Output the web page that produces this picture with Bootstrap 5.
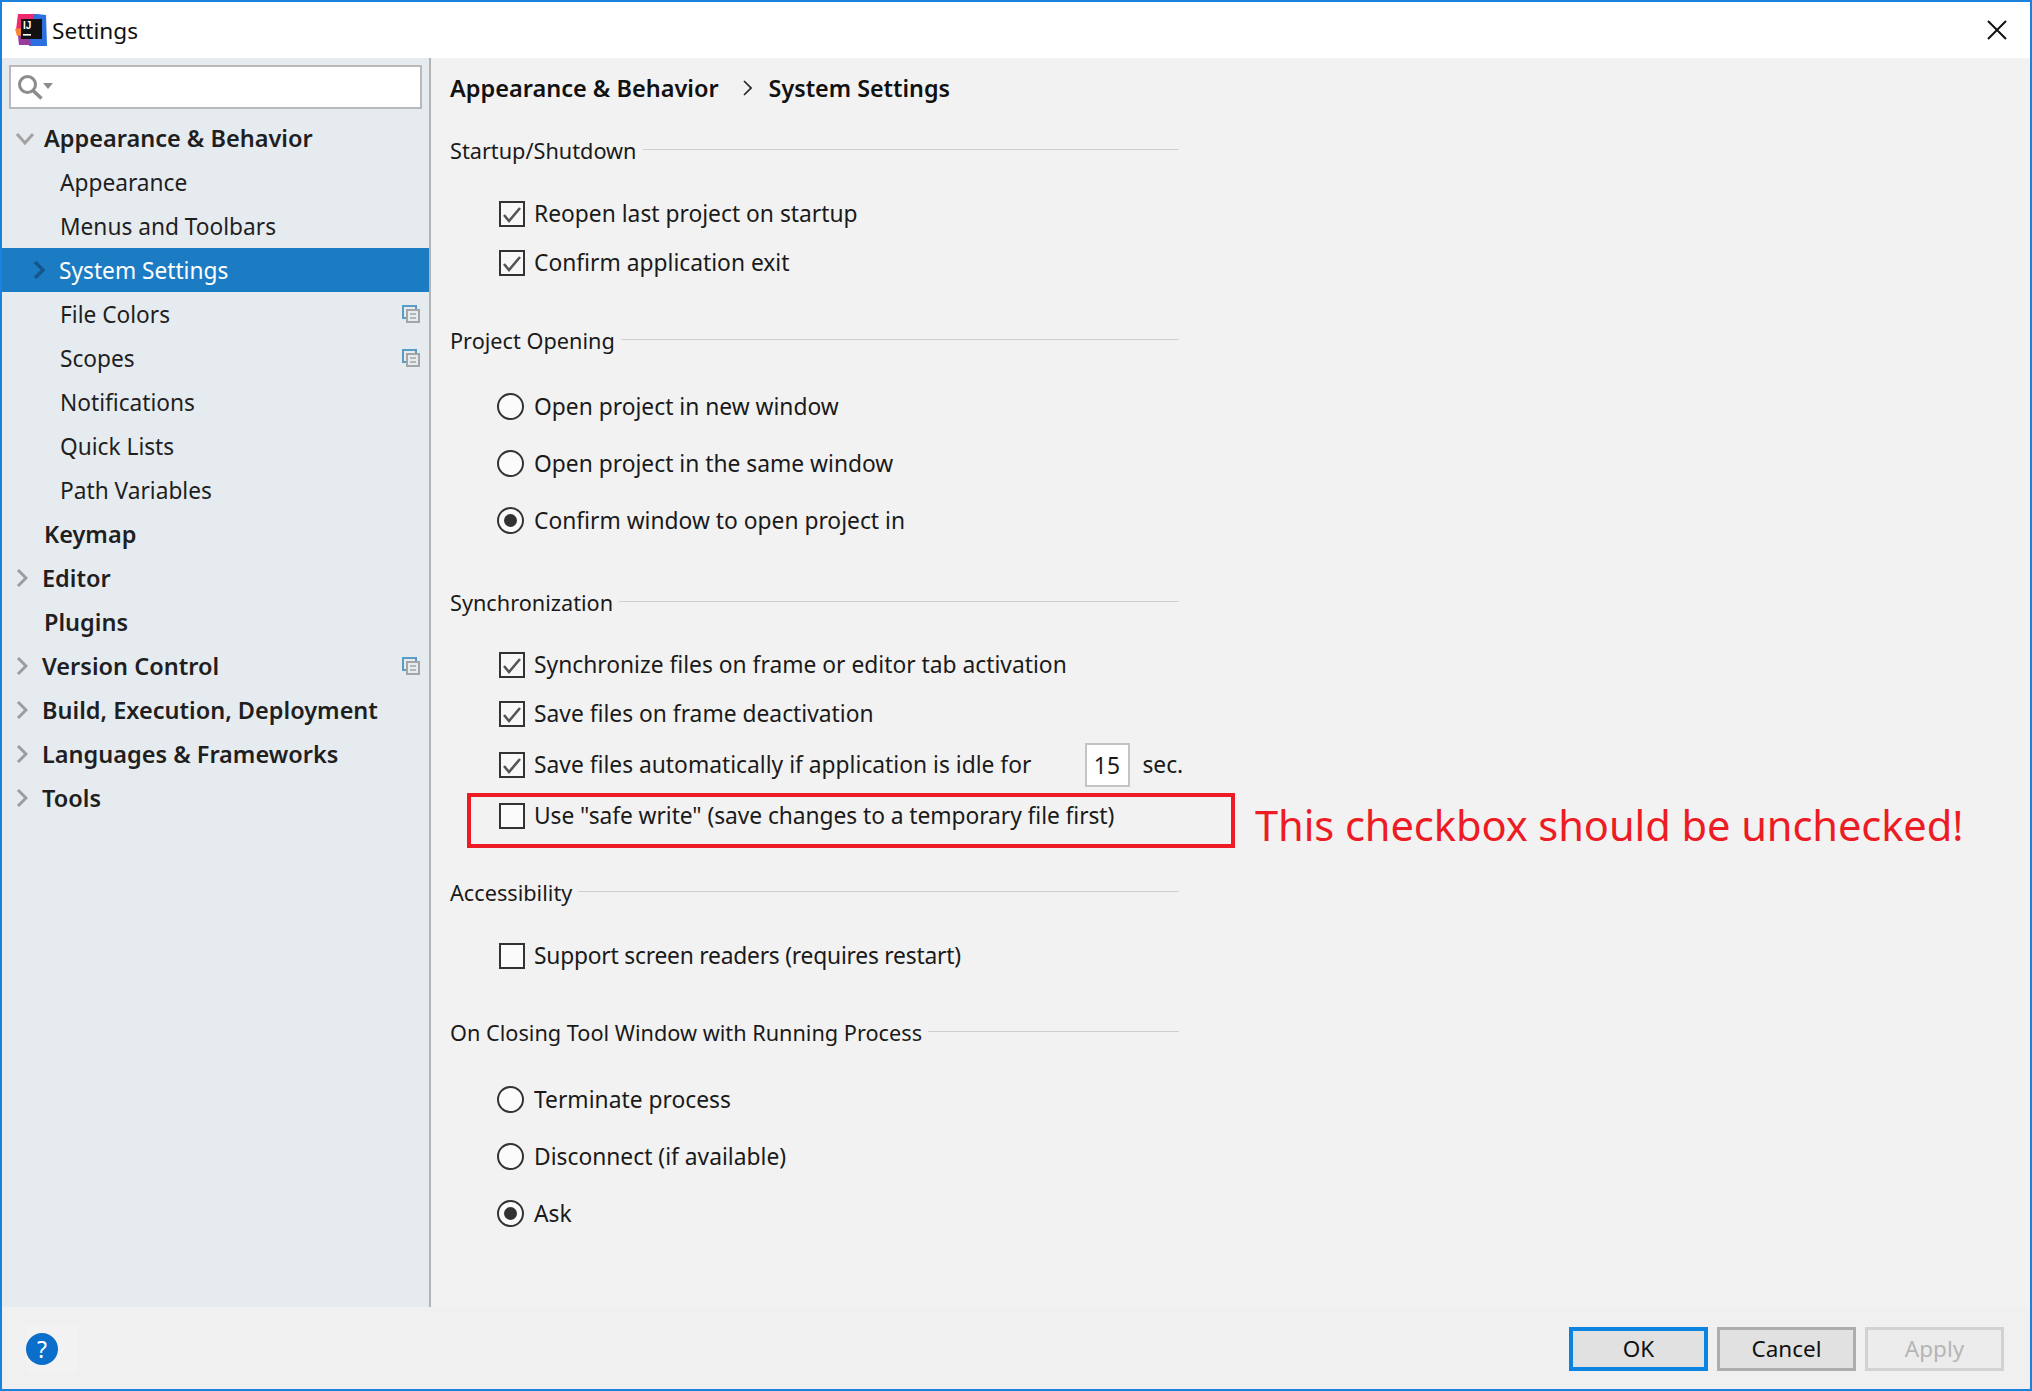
<!DOCTYPE html>
<html lang="en">
<head>
<meta charset="utf-8">
<title>Settings</title>
<link href="https://cdn.jsdelivr.net/npm/bootstrap@5.3.0/dist/css/bootstrap.min.css" rel="stylesheet">
<style>
html,body{height:100%;overflow:hidden}
body{font-family:"Noto Sans","Open Sans",sans-serif;font-size:22.8px;color:#1a1a1a;background:#f2f2f2;line-height:1.3}
.win{height:1391px;border:2px solid #1a82dc;background:#f2f2f2}
.titlebar{height:56px;background:#fff;padding:0 23px 0 13px}
.titlebar .ttl{font-size:22.6px;margin:2px 0 0 5px;color:#111}
.mid{min-height:0}
.side{width:429px;background:#e6ebf0;border-right:2px solid #b3b3b3;flex:none}
.searchwrap{padding:7px}
.searchbox{height:44px;background:#fff;border:2px solid #b9b9b9;padding-left:7px}
.tree{list-style:none;margin:0;padding:0;font-size:22.7px}
.tree li{height:44px;display:flex;align-items:center;color:#1f1f1f}
.t-top,.t-arr,.t-open{font-weight:600;font-size:23.5px;color:#161616}
.t-top{padding-left:42px}
.t-arr{padding-left:14px}
.t-arr svg:first-child{margin-right:14px}
.t-open{padding-left:13px}
.t-open svg{margin:2px 9px 0 0}
.t-kid{padding-left:58px;padding-top:2px}
.tree li.t-sel{background:#1b7cc4;color:#fff;padding-left:31px;padding-top:2px}
.t-sel svg{margin:-2px 14px 0 0}
.t-kid svg{margin-top:-2px}
.cp{margin-left:auto;margin-right:9px}
.pane{padding-left:19px;min-width:0}
.crumbs{height:73px;padding-top:11px;font-weight:600;font-size:23.5px;color:#111}
.crumbs .cpath{height:38px}
.crumbs svg{margin:0 17px 0 24px}
.crumbs .cend{font-size:23.3px}
.sect{width:729px;margin-top:34px}
.sect.first{margin-top:0}
.sect.after{margin-top:33px}
.sect-h{height:40px;margin-bottom:17px;font-size:21.7px}
.first .sect-h,.low .sect-h{margin-bottom:18px}
.sect-h i{flex:1;height:1px;background:#cfcfcf;margin:0 0 4px 6px;display:block}
.opt{height:49px;padding-left:49px}
.opt.big{height:54px}
.opt.end{height:47px}
.opt.rad{height:57px;padding-left:47px}
.tight-a{letter-spacing:-.07px}
.tight-b{letter-spacing:-.22px}
.form-check-input.bx{width:26px;height:26px;margin:0 9px 0 0;border:2px solid #333;border-radius:0;background-color:#fbfbfb;flex:none;box-shadow:none;opacity:1}
.form-check-input.bx:checked{background-color:#f8f8f8;border-color:#333;background-size:22px 22px;background-image:url("data:image/svg+xml,%3csvg xmlns='http://www.w3.org/2000/svg' viewBox='0 0 22 22'%3e%3cpath d='M3 12l5 6L19 5' fill='none' stroke='%23555' stroke-width='2.6'/%3e%3c/svg%3e")}
.form-check-input.rd{width:27px;height:27px;margin:0 10px 0 0;border:2px solid #333;border-radius:50%;background-color:#fbfbfb;flex:none;box-shadow:none;opacity:1}
.form-check-input.rd:checked{border-color:#333;background-color:#fbfbfb;background-size:23px 23px;background-image:url("data:image/svg+xml,%3csvg xmlns='http://www.w3.org/2000/svg' viewBox='0 0 23 23'%3e%3ccircle cx='11.5' cy='11.5' r='6.5' fill='%23333'/%3e%3c/svg%3e")}
.form-control.secs{width:45px;height:44px;border:2px solid #c4c4c4;border-radius:0;padding:0 2px 0 0;text-align:center;margin:0 12px 0 54px;font-size:22.8px;color:#1a1a1a;background:#fff}
.flagbox{position:absolute;left:17px;top:1px;width:768px;height:55px;border:4px solid #ed1c24}
.flagnote{position:absolute;left:805px;top:3px;font-size:41.6px;line-height:60px;color:#ed1c24;white-space:nowrap}
.foot{height:82px;background:#f0f0f0;padding:18px 26px 0 24px;flex:none}
.helpbox{width:52px;height:48px;background:#f2f2f2;padding-left:0}
.helpdot{width:32px;height:32px;border-radius:50%;background:#0a6fcb;color:#fff;font-size:23px;line-height:32px;text-align:center;margin-left:0}
.btn.dlg{width:139px;height:44px;border-radius:0;font-size:22.5px;line-height:1;padding:0;color:#111;background:#e1e1e1;border:3px solid #adadad;margin-top:2px}
.btn.dlg.pri{border:4px solid #0a84e0}
.btn.dlg:disabled{background:#ececec;border-color:#d2d2d2;color:#b5b5b5;opacity:1}
.gap9{gap:9px}
</style>
</head>
<body>
<div class="win d-flex flex-column">
  <div class="titlebar d-flex align-items-center flex-none">
    <svg width="32" height="32" viewBox="0 0 32 32">
      <polygon points="13,-1 31,1 32,32 14,32" fill="#2b6fe0"/>
      <polygon points="3,0 20,-1 15,14 1,16" fill="#f0286e"/>
      <polygon points="0,15 7,14 7,23 2,22" fill="#f58634"/>
      <polygon points="3,22 14,20 16,31 4,31" fill="#9a3b9e"/>
      <rect x="6" y="5" width="21" height="20" fill="#111"/>
      <text x="8" y="14.5" font-family="Liberation Sans" font-weight="700" font-size="10" fill="#fff">IJ</text>
      <rect x="8" y="20" width="8" height="1.6" fill="#fff"/>
    </svg>
    <span class="ttl">Settings</span>
    <svg class="ms-auto" width="20" height="20" viewBox="0 0 20 20"><path d="M1 1l18 18M19 1L1 19" stroke="#111" stroke-width="2" fill="none"/></svg>
  </div>
  <div class="mid d-flex flex-grow-1">
    <div class="side">
      <div class="searchwrap">
        <div class="searchbox d-flex align-items-center">
          <svg width="36" height="26" viewBox="0 0 36 26"><circle cx="9.5" cy="10.5" r="8" fill="none" stroke="#8c8c8c" stroke-width="3"/><path d="M15 16.5l8.5 8" stroke="#8c8c8c" stroke-width="3.6"/><path d="M25 9h10l-5 6z" fill="#8c8c8c"/></svg>
        </div>
      </div>
      <ul class="tree">
        <li class="t-open"><svg width="20" height="14" viewBox="0 0 20 14"><path d="M2 2l8 9 8-9" fill="none" stroke="#a3a3a3" stroke-width="3"/></svg>Appearance &amp; Behavior</li>
        <li class="t-kid">Appearance</li>
        <li class="t-kid">Menus and Toolbars</li>
        <li class="t-sel"><svg width="12" height="20" viewBox="0 0 12 20"><path d="M2 2l8 8-8 8" fill="none" stroke="#14578f" stroke-width="3.6"/></svg>System Settings</li>
        <li class="t-kid">File Colors<svg class="cp" width="18" height="18" viewBox="0 0 18 18"><rect x="1" y="1" width="13" height="12" fill="none" stroke="#5a9cc4" stroke-width="2"/><rect x="5" y="5" width="12" height="12" fill="#e6ebf0" stroke="#a5a5a5" stroke-width="2"/><path d="M8 9h6M8 13h6" stroke="#a5a5a5" stroke-width="1.6"/></svg></li>
        <li class="t-kid">Scopes<svg class="cp" width="18" height="18" viewBox="0 0 18 18"><rect x="1" y="1" width="13" height="12" fill="none" stroke="#5a9cc4" stroke-width="2"/><rect x="5" y="5" width="12" height="12" fill="#e6ebf0" stroke="#a5a5a5" stroke-width="2"/><path d="M8 9h6M8 13h6" stroke="#a5a5a5" stroke-width="1.6"/></svg></li>
        <li class="t-kid">Notifications</li>
        <li class="t-kid">Quick Lists</li>
        <li class="t-kid">Path Variables</li>
        <li class="t-top">Keymap</li>
        <li class="t-arr"><svg width="12" height="20" viewBox="0 0 12 20"><path d="M2 2l8 8-8 8" fill="none" stroke="#9d9d9d" stroke-width="3"/></svg>Editor</li>
        <li class="t-top">Plugins</li>
        <li class="t-arr"><svg width="12" height="20" viewBox="0 0 12 20"><path d="M2 2l8 8-8 8" fill="none" stroke="#9d9d9d" stroke-width="3"/></svg>Version Control<svg class="cp" width="18" height="18" viewBox="0 0 18 18"><rect x="1" y="1" width="13" height="12" fill="none" stroke="#5a9cc4" stroke-width="2"/><rect x="5" y="5" width="12" height="12" fill="#e6ebf0" stroke="#a5a5a5" stroke-width="2"/><path d="M8 9h6M8 13h6" stroke="#a5a5a5" stroke-width="1.6"/></svg></li>
        <li class="t-arr"><svg width="12" height="20" viewBox="0 0 12 20"><path d="M2 2l8 8-8 8" fill="none" stroke="#9d9d9d" stroke-width="3"/></svg>Build, Execution, Deployment</li>
        <li class="t-arr"><svg width="12" height="20" viewBox="0 0 12 20"><path d="M2 2l8 8-8 8" fill="none" stroke="#9d9d9d" stroke-width="3"/></svg>Languages &amp; Frameworks</li>
        <li class="t-arr"><svg width="12" height="20" viewBox="0 0 12 20"><path d="M2 2l8 8-8 8" fill="none" stroke="#9d9d9d" stroke-width="3"/></svg>Tools</li>
      </ul>
    </div>
    <div class="pane flex-grow-1">
      <div class="crumbs"><div class="cpath d-flex align-items-center">Appearance &amp; Behavior<svg width="9" height="16" viewBox="0 0 9 16"><path d="M1 1l7 7-7 7" fill="none" stroke="#222" stroke-width="1.6"/></svg><span class="cend">System Settings</span></div></div>

      <div class="sect first">
        <div class="sect-h d-flex align-items-center">Startup/Shutdown<i></i></div>
        <label class="opt d-flex align-items-center"><input class="form-check-input bx" type="checkbox" checked>Reopen last project on startup</label>
        <label class="opt d-flex align-items-center"><input class="form-check-input bx" type="checkbox" checked>Confirm application exit</label>
      </div>

      <div class="sect">
        <div class="sect-h d-flex align-items-center">Project Opening<i></i></div>
        <label class="opt rad d-flex align-items-center"><input class="form-check-input rd" type="radio" name="po">Open project in new window</label>
        <label class="opt rad d-flex align-items-center"><input class="form-check-input rd" type="radio" name="po">Open project in the same window</label>
        <label class="opt rad d-flex align-items-center"><input class="form-check-input rd" type="radio" name="po" checked>Confirm window to open project in</label>
      </div>

      <div class="sect">
        <div class="sect-h d-flex align-items-center">Synchronization<i></i></div>
        <label class="opt d-flex align-items-center"><input class="form-check-input bx" type="checkbox" checked>Synchronize files on frame or editor tab activation</label>
        <label class="opt d-flex align-items-center"><input class="form-check-input bx" type="checkbox" checked>Save files on frame deactivation</label>
        <label class="opt big d-flex align-items-center text-nowrap"><input class="form-check-input bx" type="checkbox" checked>Save files automatically if application is idle for<input class="form-control secs" type="text" value="15">sec.</label>
        <div class="opt end tight-a d-flex align-items-center position-relative"><input class="form-check-input bx" type="checkbox">Use "safe write" (save changes to a temporary file first)<span class="flagbox"></span><span class="flagnote">This checkbox should be unchecked!</span></div>
      </div>

      <div class="sect low">
        <div class="sect-h d-flex align-items-center">Accessibility<i></i></div>
        <label class="opt tight-b d-flex align-items-center"><input class="form-check-input bx" type="checkbox">Support screen readers (requires restart)</label>
      </div>

      <div class="sect low after">
        <div class="sect-h d-flex align-items-center">On Closing Tool Window with Running Process<i></i></div>
        <label class="opt rad d-flex align-items-center"><input class="form-check-input rd" type="radio" name="oc">Terminate process</label>
        <label class="opt rad d-flex align-items-center"><input class="form-check-input rd" type="radio" name="oc">Disconnect (if available)</label>
        <label class="opt rad d-flex align-items-center"><input class="form-check-input rd" type="radio" name="oc" checked>Ask</label>
      </div>
    </div>
  </div>
  <div class="foot d-flex align-items-start">
    <div class="helpbox d-flex align-items-center"><div class="helpdot">?</div></div>
    <div class="ms-auto d-flex gap9">
      <button class="btn dlg pri" type="button">OK</button>
      <button class="btn dlg" type="button">Cancel</button>
      <button class="btn dlg" type="button" disabled>Apply</button>
    </div>
  </div>
</div>
</body>
</html>
